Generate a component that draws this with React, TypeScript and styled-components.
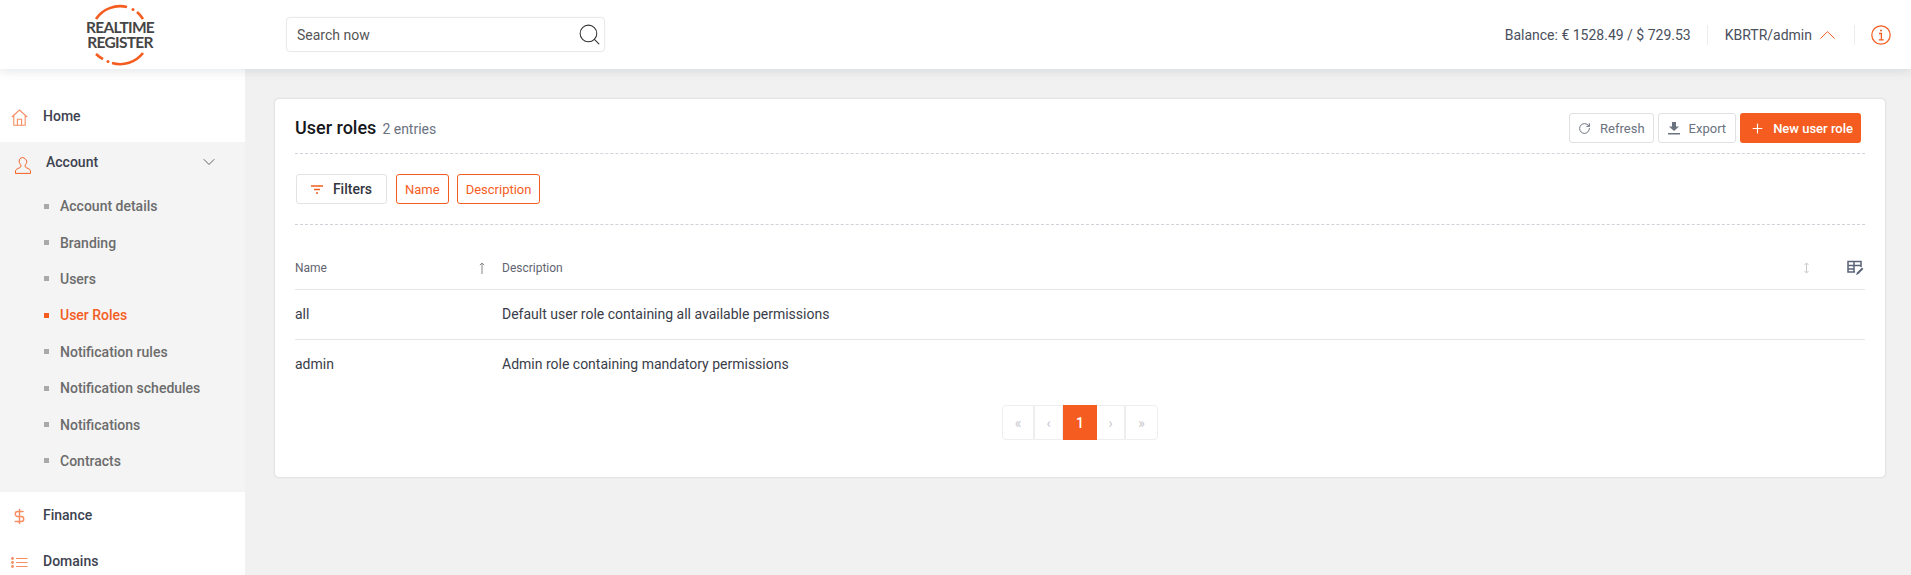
import { ChevronDown, DollarSign, Plus, RotateCw, Search } from "lucide-react";
import styled, { createGlobalStyle } from "styled-components";

const GlobalStyle = createGlobalStyle`
  html, body {
    margin: 0;
    height: 575px;
    overflow: hidden;
    background: #f1f1f1;
    font-family: Roboto, "Liberation Sans", sans-serif;
  }
  * {
    box-sizing: border-box;
  }
`;

const subItems = [
  "Account details",
  "Branding",
  "Users",
  "User Roles",
  "Notification rules",
  "Notification schedules",
  "Notifications",
  "Contracts",
];

const roles = [
  { name: "all", description: "Default user role containing all available permissions" },
  { name: "admin", description: "Admin role containing mandatory permissions" },
];

function Logo() {
  return (
    <LogoWrap>
      <LogoRing viewBox="0 0 70 66" width="70" height="66">
        <g fill="none" stroke="#f45d1f" strokeWidth="2.6">
          <path d="M11 17A29 29 0 0 1 42 5" />
          <path d="M52 10A29 29 0 0 1 58 17" />
          <path d="M11 52A29 29 0 0 0 18 57" />
          <path d="M27 61A29 29 0 0 0 58 51" />
        </g>
        <circle cx="48" cy="7.5" r="1.5" fill="#f45d1f" />
        <circle cx="23" cy="59.5" r="1.5" fill="#f45d1f" />
      </LogoRing>
      <LogoLine>REALTIME</LogoLine>
      <LogoLine>REGISTER</LogoLine>
    </LogoWrap>
  );
}

function HomeIcon() {
  return (
    <svg width="17" height="17" viewBox="0 0 17 17" fill="none" stroke="#f45d1f" strokeWidth="1.1">
      <path d="M.8 8 8.5 1l7.7 7M2.8 6.6v9.6h11.4V6.6" />
      <path d="M6.4 16.2v-6h4.2v6" />
    </svg>
  );
}

function ListIcon() {
  return (
    <svg width="17" height="11" viewBox="0 0 17 11" stroke="#f45d1f" strokeWidth="1.1">
      <path d="M5 1.5h11.5M5 5.5h11.5M5 9.5h11.5" />
      <g fill="#f45d1f" stroke="none">
        <circle cx="1.5" cy="1.5" r="1.4" />
        <circle cx="1.5" cy="5.5" r="1.4" />
        <circle cx="1.5" cy="9.5" r="1.4" />
      </g>
    </svg>
  );
}

function UserIcon() {
  return (
    <svg width="17" height="17" viewBox="0 0 17 17" fill="none" stroke="#f45d1f" strokeWidth="1">
      <path d="M8.5.6C6.4.6 5.2 2.2 5.2 4.2c0 1.6.8 2.9 1.5 3.7.3.4.3 1.8-.3 2.4-.8.7-4.2 1.3-4.8 3.3-.2.7-.2 2-.1 2.8h15c.1-.8.1-2.1-.1-2.8-.6-2-4-2.6-4.8-3.3-.6-.6-.6-2-.3-2.4.7-.8 1.5-2.1 1.5-3.7C11.8 2.2 10.6.6 8.5.6z" />
    </svg>
  );
}

function CaretUp() {
  return (
    <svg width="15" height="8" viewBox="0 0 15 8" fill="none" stroke="#f45d1f" strokeWidth="1">
      <path d="M.4 7.6 7.5.7l7.1 6.9" />
    </svg>
  );
}

function InfoIcon() {
  return (
    <svg width="20" height="20" viewBox="0 0 20 20" fill="none" stroke="#f45d1f">
      <circle cx="10" cy="10" r="9.2" strokeWidth="1.2" />
      <path d="M8 8.5h2.4v6M7.8 14.8h5" strokeWidth="1.3" />
      <circle cx="10" cy="5.6" r="1" fill="#f45d1f" stroke="none" />
    </svg>
  );
}

function FilterIcon() {
  return (
    <svg width="12" height="9" viewBox="0 0 12 9" stroke="#f45d1f" strokeWidth="1.3">
      <path d="M0 1h12M3 4.5h6M5 8h2" />
    </svg>
  );
}

function DownloadIcon() {
  return (
    <svg width="12" height="13" viewBox="0 0 12 13" fill="#6b7280">
      <path d="M4 0h4v4.5h3L6 9 1 4.5h3z" />
      <rect y="11" width="12" height="1.5" />
    </svg>
  );
}

function UpArrow() {
  return (
    <svg width="6" height="12" viewBox="0 0 6 12" fill="none" stroke="#888" strokeWidth="1">
      <path d="M3 12V1M.8 3.2 3 1l2.2 2.2" />
    </svg>
  );
}

function BothArrow() {
  return (
    <svg width="7" height="12" viewBox="0 0 7 12" fill="none" stroke="#c9c9c9" strokeWidth="1">
      <path d="M3.5 1v10M1.5 3 3.5 1l2 2M1.5 9l2 2 2-2" />
    </svg>
  );
}

function TableEditIcon() {
  return (
    <svg width="17" height="16" viewBox="0 0 17 16" fill="none" stroke="#5a6478" strokeWidth="1.5">
      <path d="M8 12H1V1.5h13V7M1 5.5h13M7 1.5V12M1 9h6" />
      <path d="M9 15l1-2.5 5-5 1.4 1.4-5 5z" fill="#5a6478" stroke="none" />
    </svg>
  );
}

export default function App() {
  return (
    <>
      <GlobalStyle />
      <Header>
        <LogoBox>
          <Logo />
        </LogoBox>
        <SearchBox>
          <SearchText>Search now</SearchText>
          <Search size={25} strokeWidth={1} color="#333" />
        </SearchBox>
        <HeaderRight>
          <Balance>Balance: € 1528.49 / $ 729.53</Balance>
          <HeaderDivider />
          <UserMenu>
            KBRTR/admin
            <CaretUp />
          </UserMenu>
          <HeaderDivider />
          <InfoIcon />
        </HeaderRight>
      </Header>
      <Layout>
        <Sidebar>
          <NavRow>
            <NavIcon>
              <HomeIcon />
            </NavIcon>
            Home
          </NavRow>
          <Section>
            <SectionTitle>
              <SectionIcon>
                <UserIcon />
              </SectionIcon>
              Account
              <SectionChevron>
                <ChevronDown size={20} strokeWidth={1} color="#444" />
              </SectionChevron>
            </SectionTitle>
            {subItems.map((item) => (
              <SubItem key={item} $active={item === "User Roles"}>
                {item}
              </SubItem>
            ))}
          </Section>
          <NavRow $tall>
            <NavIcon>
              <DollarSign size={17} strokeWidth={2} color="#f45d1f" />
            </NavIcon>
            Finance
          </NavRow>
          <NavRow $tall>
            <NavIcon>
              <ListIcon />
            </NavIcon>
            Domains
          </NavRow>
        </Sidebar>
        <Main>
          <Card>
            <CardHead>
              <TitleBlock>
                <Title>User roles</Title>
                <Entries>2 entries</Entries>
              </TitleBlock>
              <Actions>
                <GhostButton>
                  <RotateCw size={13} strokeWidth={1.8} color="#6b7280" />
                  Refresh
                </GhostButton>
                <GhostButton $wide>
                  <DownloadIcon />
                  Export
                </GhostButton>
                <PrimaryButton>
                  <Plus size={15} strokeWidth={1.8} color="#fff" />
                  New user role
                </PrimaryButton>
              </Actions>
            </CardHead>
            <FilterBar>
              <FilterButton>
                <FilterIcon />
                Filters
              </FilterButton>
              <FilterChip>Name</FilterChip>
              <FilterChip>Description</FilterChip>
            </FilterBar>
            <TableHead>
              <NameHead>
                Name
                <UpArrow />
              </NameHead>
              <span>Description</span>
              <HeadTools>
                <BothArrow />
                <TableEditIcon />
              </HeadTools>
            </TableHead>
            {roles.map((role, i) => (
              <Row key={role.name} $last={i === roles.length - 1}>
                <span>{role.name}</span>
                <span>{role.description}</span>
              </Row>
            ))}
            <Pagination>
              <PageCell $w={32}>«</PageCell>
              <PageCell $w={29}>‹</PageCell>
              <PageCell $w={34} $active>
                1
              </PageCell>
              <PageCell $w={28} $plain>
                ›
              </PageCell>
              <PageCell $w={33}>»</PageCell>
            </Pagination>
          </Card>
        </Main>
      </Layout>
    </>
  );
}

const Header = styled.header`
  position: relative;
  z-index: 2;
  display: flex;
  align-items: center;
  height: 69px;
  background: #fff;
  box-shadow: 0 2px 10px rgba(60, 70, 90, 0.14);
`;

const LogoBox = styled.div`
  display: flex;
  justify-content: center;
  width: 240px;
`;

const LogoWrap = styled.div`
  position: relative;
  display: flex;
  flex-direction: column;
  align-items: center;
  justify-content: center;
  width: 70px;
  height: 66px;
`;

const LogoRing = styled.svg`
  position: absolute;
  top: 0;
  left: 0;
`;

const LogoLine = styled.span`
  font-family: Lato, sans-serif;
  font-size: 15.5px;
  font-weight: 700;
  line-height: 15px;
  letter-spacing: -0.7px;
  white-space: nowrap;
  color: #454545;
`;

const SearchBox = styled.div`
  display: flex;
  align-items: center;
  justify-content: space-between;
  width: 319px;
  height: 35px;
  margin-left: 46px;
  padding: 0 2px 0 10px;
  border: 1px solid #eaeaea;
  border-radius: 4px;
  box-shadow: 0 0 2px rgba(0, 0, 0, 0.06);
`;

const SearchText = styled.span`
  font-size: 14px;
  color: #555;
`;

const HeaderRight = styled.div`
  display: flex;
  align-items: center;
  margin-left: auto;
  padding-right: 20px;
  font-size: 14px;
  color: #4a4f5c;
`;

const Balance = styled.span`
  white-space: nowrap;
`;

const HeaderDivider = styled.span`
  width: 1px;
  height: 20px;
  margin: 0 16px;
  background: #ececec;
`;

const UserMenu = styled.div`
  display: flex;
  align-items: center;
  gap: 8px;
  margin-left: 1px;
  margin-right: 3px;
`;

const Layout = styled.div`
  display: flex;
  height: 506px;
`;

const Sidebar = styled.aside`
  flex: 0 0 245px;
  height: 506px;
  padding-top: 21px;
  overflow: hidden;
  background: #fff;
`;

const NavRow = styled.div<{ $tall?: boolean }>`
  display: flex;
  align-items: center;
  height: ${(p) => (p.$tall ? "46px" : "52px")};
  font-size: 14px;
  font-weight: 500;
  color: #3d4250;
`;

const NavIcon = styled.span`
  display: flex;
  justify-content: center;
  width: 38px;
  margin-right: 5px;
  padding-top: 3px;
  opacity: 0.7;
`;

const Section = styled.div`
  height: 350px;
  background: #f4f4f4;
`;

const SectionTitle = styled.div`
  display: flex;
  align-items: center;
  height: 40px;
  margin-bottom: 6px;
  font-size: 14px;
  font-weight: 500;
  color: #3d4250;
`;

const SectionIcon = styled.span`
  display: flex;
  justify-content: center;
  width: 44px;
  margin-right: 2px;
  margin-top: 6px;
`;

const SectionChevron = styled.span`
  display: flex;
  margin-left: auto;
  margin-right: 26px;
`;

const SubItem = styled.div<{ $active?: boolean }>`
  display: flex;
  align-items: center;
  gap: 11px;
  height: 36.4px;
  padding-left: 44px;
  font-size: 14px;
  font-weight: 500;
  color: ${(p) => (p.$active ? "#f45d1f" : "#6c6c6c")};

  &::before {
    content: "";
    width: 5px;
    height: 5px;
    background: ${(p) => (p.$active ? "#f45d1f" : "#a9a9a9")};
  }
`;

const Main = styled.main`
  flex: 1;
  padding: 30px 26px 0 30px;
`;

const Card = styled.section`
  height: 378px;
  padding: 0 20px;
  background: #fff;
  border-radius: 4px;
  box-shadow: 0 0 2px rgba(0, 0, 0, 0.22);
`;

const CardHead = styled.div`
  display: flex;
  align-items: center;
  justify-content: space-between;
  height: 55px;
  padding: 4px 4px 0 0;
  border-bottom: 1px dashed #cfd2d8;
`;

const TitleBlock = styled.div`
  display: flex;
  align-items: baseline;
  gap: 6px;
  margin-top: -2px;
`;

const Title = styled.h1`
  margin: 0;
  font-size: 18px;
  font-weight: 500;
  color: #15171c;
`;

const Entries = styled.span`
  font-size: 14px;
  color: #6b7280;
`;

const Actions = styled.div`
  display: flex;
  gap: 4px;
`;

const GhostButton = styled.button<{ $wide?: boolean }>`
  display: flex;
  align-items: center;
  justify-content: center;
  gap: 9px;
  height: 30px;
  padding: 0 ${(p) => (p.$wide ? "9px" : "8px")};
  background: #fff;
  border: 1px solid #dfe1e5;
  border-radius: 3px;
  font: 400 13px Roboto, sans-serif;
  color: #6b7280;
`;

const PrimaryButton = styled.button`
  display: flex;
  align-items: center;
  gap: 8px;
  height: 30px;
  padding: 0 8px 0 10px;
  background: #f45d1f;
  border: 0;
  border-radius: 3px;
  font: 500 13px Roboto, sans-serif;
  color: #fff;
`;

const FilterBar = styled.div`
  display: flex;
  align-items: center;
  gap: 8px;
  height: 71px;
  padding-left: 1px;
  border-bottom: 1px dashed #cfd2d8;
`;

const FilterButton = styled.button`
  display: flex;
  align-items: center;
  justify-content: center;
  gap: 10px;
  width: 91px;
  height: 30px;
  margin-right: 1px;
  background: #fff;
  border: 1px solid #e3e3e3;
  border-radius: 3px;
  font: 500 14px Roboto, sans-serif;
  color: #33363f;
`;

const FilterChip = styled.button`
  height: 30px;
  padding: 0 8px;
  background: #fff;
  border: 1px solid #f45d1f;
  border-radius: 3px;
  font: 400 13px Roboto, sans-serif;
  color: #f45d1f;
`;

const TableHead = styled.div`
  display: grid;
  grid-template-columns: 207px 1fr 62px;
  align-items: center;
  height: 44px;
  margin-top: 21px;
  border-bottom: 1px solid #e6e6e6;
  font-size: 12px;
  font-weight: 400;
  color: #5f6470;
`;

const NameHead = styled.div`
  display: flex;
  align-items: center;
  justify-content: space-between;
  padding-right: 17px;
`;

const HeadTools = styled.div`
  display: flex;
  align-items: center;
  justify-content: space-between;
  padding-right: 1px;
`;

const Row = styled.div<{ $last?: boolean }>`
  display: grid;
  grid-template-columns: 207px 1fr;
  align-items: center;
  height: 50px;
  padding-bottom: 2px;
  border-bottom: ${(p) => (p.$last ? "0" : "1px solid #e6e6e6")};
  font-size: 14px;
  color: #3a3d49;
`;

const Pagination = styled.nav`
  display: flex;
  justify-content: center;
  margin-top: 15px;
`;

const PageCell = styled.span<{ $w: number; $active?: boolean; $plain?: boolean }>`
  display: flex;
  align-items: center;
  justify-content: center;
  width: ${(p) => p.$w}px;
  height: 35px;
  background: ${(p) => (p.$active ? "#f45d1f" : "#fff")};
  border: 1px solid ${(p) => (p.$active ? "#f45d1f" : "#eeeef0")};
  border-left-width: ${(p) => (p.$plain ? "0" : "1px")};
  font-size: 14px;
  font-weight: ${(p) => (p.$active ? 500 : 400)};
  color: ${(p) => (p.$active ? "#fff" : "#c8c8cc")};

  &:first-child {
    border-radius: 4px 0 0 4px;
  }

  &:last-child {
    border-radius: 0 4px 4px 0;
  }
`;
